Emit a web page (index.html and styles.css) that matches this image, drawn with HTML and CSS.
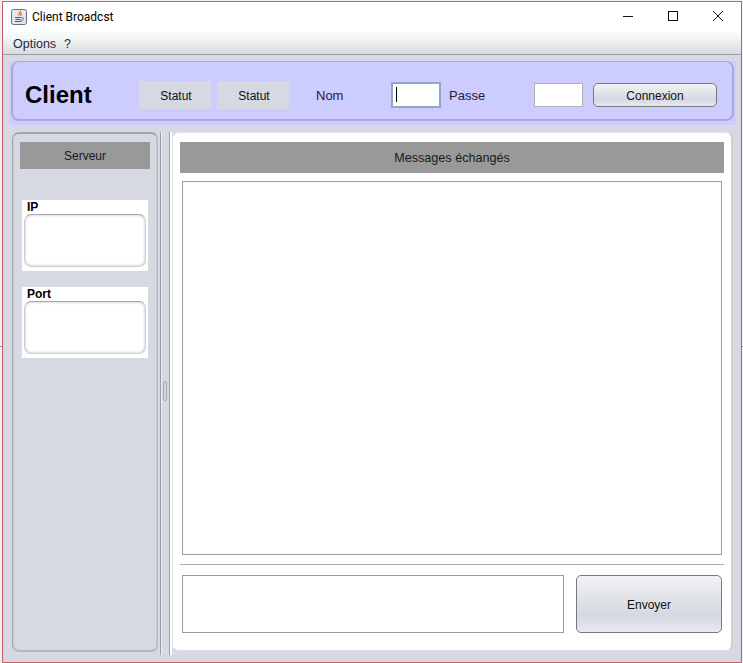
FILE: index.html
```html
<!DOCTYPE html>
<html lang="fr">
<head>
  <meta charset="UTF-8">
  <meta name="viewport" content="width=device-width, initial-scale=1.0">
  <title>Client Broadcst</title>
  <link rel="stylesheet" href="styles.css">
</head>
<body>
  <div class="window">
    <div class="titlebar">
      <svg class="app-icon" width="16" height="16" viewBox="0 0 16 16">
        <rect x="0.500" y="0.500" width="15" height="15" rx="2" fill="#e3e7ec" stroke="#5f7288"/>
        <path d="M9.500 1.500c.5 2-3 2.500-1.500 5M11 4c-1.500 .5-2 1.500-1 3" fill="none" stroke="#e0701e" stroke-width="1.200"/>
        <path d="M4 8.500h6M4.500 10.500h5M4 12.500h6.500M10.500 8.500c2.500-.5 2.500 2.500-.5 3" fill="none" stroke="#41607f"/>
      </svg>
      <span class="app-title">Client Broadcst</span>
      <div class="window-controls">
        <svg width="12" height="12" viewBox="0 0 12 12"><path d="M1 6.500h10" stroke="#111" fill="none"/></svg>
        <svg width="12" height="12" viewBox="0 0 12 12"><rect x="1.500" y="1.500" width="9" height="9" stroke="#111" fill="none"/></svg>
        <svg width="12" height="12" viewBox="0 0 12 12"><path d="M1 1l10 10M11 1L1 11" stroke="#111" fill="none"/></svg>
      </div>
    </div>

    <div class="menubar">
      <span>Options</span>
      <span>?</span>
    </div>

    <div class="content">
      <div class="top-wrap">
        <div class="top-panel">
          <div class="client-title">Client</div>
          <div class="statut">Statut</div>
          <div class="statut">Statut</div>
          <label class="lbl-nom">Nom</label>
          <div class="field field-focus"><span class="caret"></span></div>
          <label class="lbl-passe">Passe</label>
          <div class="field field-passe"></div>
          <button class="btn btn-connexion">Connexion</button>
        </div>
      </div>

      <div class="split">
        <div class="side-panel">
          <div class="side-head">Serveur</div>
          <div class="info-box info-ip">
            <div class="info-label">IP</div>
            <div class="info-value"></div>
          </div>
          <div class="info-box">
            <div class="info-label">Port</div>
            <div class="info-value"></div>
          </div>
        </div>

        <div class="divider"><span class="grip"></span></div>

        <div class="main-panel">
          <div class="main-head">Messages échangés</div>
          <div class="messages"></div>
          <div class="separator"></div>
          <div class="send-row">
            <div class="send-input"></div>
            <button class="btn btn-envoyer">Envoyer</button>
          </div>
        </div>
      </div>
    </div>
  </div>
</body>
</html>
```

FILE: styles.css
```css
html, body {
  height: 100%;
}
body {
  margin: 0;
  background: linear-gradient(#f1f1f3 346px, #8d929c 346px, #8d929c 347px, #f1f1f3 347px);
  font-family: "Liberation Sans", Arial, sans-serif;
  font-size: 12px;
  color: #111;
  overflow: hidden;
}
.window {
  box-sizing: border-box;
  width: 740px;
  height: 662px;
  margin: 1px 0 0 2px;
  border: 1px solid #c4606e;
  background-color: #d6d9e1;
  display: flex;
  flex-direction: column;
}
.titlebar {
  height: 30px;
  flex: none;
  background-color: #fff;
  display: flex;
  align-items: center;
  padding-left: 8px;
}
.app-title {
  margin-left: 5px;
  font-family: Roboto, sans-serif;
  font-size: 12px;
  color: #000;
}
.window-controls {
  margin-left: auto;
  display: flex;
  gap: 33px;
  padding: 0 17px 2px 0;
}
.menubar {
  box-sizing: border-box;
  height: 23px;
  flex: none;
  display: flex;
  align-items: center;
  gap: 8px;
  padding: 1px 0 0 10px;
  font-size: 12.5px;
  background: linear-gradient(#fafbfb 0%, #f6f7f7 25%, #d7dae1 100%);
  border-bottom: 1px solid #9a9da5;
  color: #1c2a3c;
}
.content {
  flex: 1;
  display: flex;
  flex-direction: column;
  padding: 6px 5px 7px 6px;
  min-height: 0;
}
.top-wrap {
  height: 64px;
  flex: none;
  background-color: #ccccff;
  padding: 0 2px 4px 2px;
  box-sizing: border-box;
}
.top-panel {
  box-sizing: border-box;
  height: 60px;
  display: flex;
  align-items: center;
  border: 1px solid #a9a9d2;
  border-width: 1px 2px 2px 2px;
  border-radius: 8px;
  padding: 8px 0 0 12px;
}
.client-title {
  width: 114px;
  font-size: 24px;
  font-weight: bold;
  color: #000;
}
.statut {
  box-sizing: border-box;
  width: 72px;
  height: 28px;
  margin-right: 6px;
  padding: 2px 0 0 2px;
  background-color: #d6d9e1;
  display: flex;
  align-items: center;
  justify-content: center;
}
.lbl-nom {
  width: 75px;
  margin-left: 21px;
  padding-top: 2px;
  font-size: 13px;
  color: #1c2040;
}
.lbl-passe {
  width: 85px;
  margin-left: 8px;
  padding-top: 2px;
  font-size: 13px;
  color: #1c2040;
}
.field {
  box-sizing: border-box;
  background-color: #fff;
  border: 1px solid #b0b0b8;
  height: 24px;
  width: 49px;
}
.field-focus {
  width: 50px;
  height: 26px;
  border: 2px solid #8fa6c4;
  display: flex;
  align-items: center;
  padding-left: 3px;
}
.caret {
  width: 1px;
  height: 15px;
  background-color: #000;
}
.btn {
  font-family: inherit;
  font-size: 12px;
  color: #111;
  border: 1px solid #75787f;
  border-radius: 5px;
  background: linear-gradient(#f1f2f4 0%, #d5d8e0 70%, #e8e9f2 100%);
  padding: 2px 0 0 0;
}
.btn-connexion {
  width: 124px;
  height: 24px;
  margin-left: 10px;
}
.split {
  flex: 1;
  display: flex;
  min-height: 0;
  margin-top: 7px;
}
.side-panel {
  box-sizing: border-box;
  width: 146px;
  margin-left: 3px;
  height: 520px;
  padding: 8px 7px 0 7px;
  border: 1px solid #a8abb2;
  border-top-width: 2px;
  border-bottom-width: 2px;
  border-color: #a3a6ad #b4b7be #b4b7be #a3a6ad;
  border-radius: 7px;
  box-shadow: inset 1px 0 0 #c6c9d0, inset -1px 0 0 #c6c9d0;
}
.side-head {
  height: 27px;
  line-height: 29px;
  text-align: center;
  background-color: #999;
  color: #1a1a1a;
}
.info-box {
  width: 126px;
  height: 71px;
  margin: 16px 0 0 2px;
  background-color: #fff;
  box-sizing: border-box;
  padding: 0 2px;
}
.info-ip {
  margin-top: 31px;
}
.info-label {
  height: 14px;
  line-height: 14px;
  padding-left: 3px;
  font-weight: bold;
  color: #000;
}
.info-value {
  box-sizing: border-box;
  height: 53px;
  border: 1px solid #cfd0d4;
  border-top-color: #a8a8a8;
  border-radius: 7px;
  box-shadow: inset 0 0 3px #bcbdc1;
}
.divider {
  box-sizing: border-box;
  width: 10px;
  margin: 0 2px 0 2px;
  height: 523px;
  border-left: 1px solid #9a9da5;
  border-right: 1px solid #9a9da5;
  box-shadow: 2px 0 0 #fff, inset 1px 0 0 #eceef1;
  display: flex;
  align-items: center;
  justify-content: center;
}
.grip {
  box-sizing: border-box;
  width: 4px;
  height: 20px;
  margin: 0 0 6px 0;
  border: 1px solid #a4a7ae;
  border-radius: 2px;
}
.main-panel {
  box-sizing: border-box;
  width: 561px;
  height: 520px;
  padding: 9px 7px 0 7px;
  background-color: #fff;
  border-radius: 7px;
  border: 1px solid #e2e3e6;
  border-bottom: 2px solid #dcdde0;
  border-right: 2px solid #cfd0d4;
}
.main-head {
  height: 31px;
  line-height: 33px;
  text-align: center;
  font-size: 12.6px;
  background-color: #999;
  color: #1a1a1a;
}
.messages {
  box-sizing: border-box;
  height: 374px;
  margin: 8px 2px 0 2px;
  border: 1px solid #9a9da5;
}
.separator {
  height: 1px;
  margin-top: 9px;
  background-color: #a9abb2;
}
.send-row {
  display: flex;
  gap: 12px;
  margin: 10px 2px 0 2px;
  height: 58px;
}
.send-input {
  box-sizing: border-box;
  width: 382px;
  border: 1px solid #9a9da5;
}
.btn-envoyer {
  width: 146px;
  height: 58px;
}
```
